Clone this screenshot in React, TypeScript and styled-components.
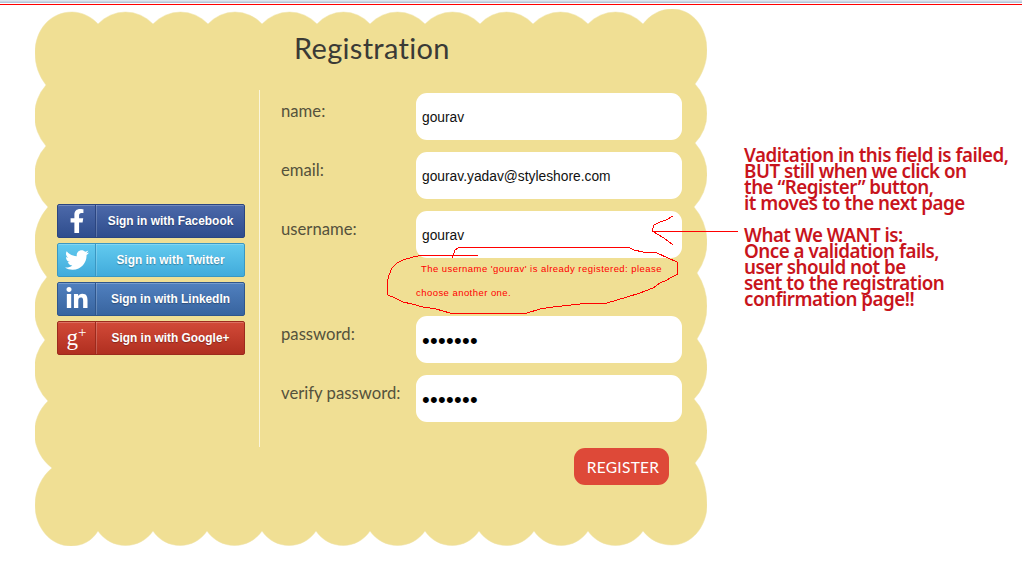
import React from "react";
import styled, { createGlobalStyle } from "styled-components";
import { FaFacebookF, FaTwitter, FaLinkedinIn } from "react-icons/fa";

const Global = createGlobalStyle`
  html, body { margin: 0; padding: 0; background: #fff; }
  body { font-family: "Liberation Sans", Arial, sans-serif; overflow: hidden; }
`;

const Page = styled.div`
  position: relative;
  width: 1022px;
  height: 572px;
  overflow: hidden;
`;

const WindowEdge = styled.div`
  height: 3px;
  background: linear-gradient(#dfe7ef 0, #dfe7ef 1px, #b4c6da 2px);
  border-bottom: 1px solid #fff;
`;
const RedRule = styled.div`
  height: 1px;
  background: #f00;
`;

const Columns = styled.div`
  display: flex;
  align-items: flex-start;
`;

const Card = styled.main`
  position: relative;
  width: 672px;
  height: 537px;
  margin: 4px 0 0 35px;
  flex: none;
`;

const CardShape = styled.svg`
  position: absolute;
  inset: 0;
  z-index: 0;
  display: block;
`;

const CardContent = styled.div`
  position: relative;
  z-index: 1;
`;

const Title = styled.h1`
  margin: 0;
  height: 81px;
  padding: 19px 0 0 259px;
  box-sizing: border-box;
  font: 400 29px/40px "Lato", sans-serif;
  color: #3a3a36;
  letter-spacing: 0.3px;
`;

const Body = styled.div`
  display: flex;
  align-items: flex-start;
`;

const Sidebar = styled.aside`
  width: 224px;
  padding: 114px 0 0 22px;
  box-sizing: border-box;
  display: flex;
  flex-direction: column;
  gap: 5px;
`;

const Divider = styled.div`
  width: 1px;
  height: 357px;
  background: #fbf6dc;
`;

const socialColors = {
  facebook: { top: "#4c69aa", bottom: "#2f4d8d", edge: "#2b4580" },
  twitter: { top: "#62caef", bottom: "#41abdb", edge: "#3a97c2" },
  linkedin: { top: "#5080bf", bottom: "#38649f", edge: "#2f568c" },
  google: { top: "#d24a38", bottom: "#b02f20", edge: "#9c2a1d" },
};

type Network = keyof typeof socialColors;

const SocialButton = styled.a<{ $net: Network }>`
  display: flex;
  width: 188px;
  height: 34px;
  box-sizing: border-box;
  border: 1px solid ${(p) => socialColors[p.$net].edge};
  border-radius: 2px;
  background: linear-gradient(${(p) => socialColors[p.$net].top}, ${(p) => socialColors[p.$net].bottom});
  color: #fff;
  box-shadow: inset 0 1px 0 rgba(255, 255, 255, 0.22);
`;

const SocialIcon = styled.span<{ $net: Network }>`
  flex: none;
  width: 37px;
  display: flex;
  align-items: center;
  justify-content: center;
  border-right: 1px solid ${(p) => socialColors[p.$net].edge};
  font-size: 24px;
`;

const SocialLabel = styled.span`
  flex: 1;
  border-left: 1px solid rgba(255, 255, 255, 0.2);
  text-align: center;
  font: 700 11.9px/33px "Liberation Sans", Arial, sans-serif;
  text-shadow: 0 1px 1px rgba(0, 0, 0, 0.3);
`;

const GoogleGlyph = styled.span`
  font: 400 23px/30px "Liberation Serif", serif;
  sup {
    font-size: 15px;
    line-height: 0;
    vertical-align: 8px;
  }
`;

const Form = styled.form`
  padding: 3px 0 0 21px;
  display: flex;
  flex-direction: column;
  gap: 12px;
`;

const Row = styled.div`
  display: grid;
  grid-template-columns: 135px 266px;
`;

const Label = styled.label`
  padding-top: 7px;
  font: 400 16.7px/22px "Lato", sans-serif;
  color: #55523c;
`;

const Field = styled.input`
  display: block;
  width: 266px;
  height: 47px;
  box-sizing: border-box;
  border: 0;
  outline: 0;
  border-radius: 11px;
  background: #fff;
  padding: 2px 6px 0;
  font: 400 13.8px "Liberation Sans", Arial, sans-serif;
  color: #111;
`;

const SecretField = styled(Field)`
  padding-top: 3px;
  font-size: 22px;
  letter-spacing: 0.3px;
  color: #000;
`;

const ErrorText = styled.p`
  margin: -1px 0 0;
  height: 47px;
  box-sizing: border-box;
  font: 400 9.5px/24px "Liberation Sans", Arial, sans-serif;
  letter-spacing: 0.45px;
  color: #f00;
  text-indent: 5px;
`;

const Actions = styled.div`
  display: flex;
  justify-content: flex-end;
  padding: 14px 13px 0 0;
`;

const RegisterButton = styled.button`
  width: 95px;
  height: 37px;
  border: 0;
  border-radius: 11px;
  background: #de4938;
  color: #fff;
  font: 400 15.5px "Lato", sans-serif;
  letter-spacing: 0.3px;
  padding: 0 0 0 3px;
`;

const Notes = styled.aside`
  margin-left: 37px;
  padding-top: 142px;
  width: 278px;
  flex: none;
  font: 600 18.8px/16px "Noto Sans", sans-serif;
  letter-spacing: -0.5px;
  color: #c8141c;
`;

const NoteBlock = styled.p`
  margin: 0 0 16px;
  white-space: nowrap;
`;

const Scribbles = styled.svg`
  position: absolute;
  inset: 0;
  z-index: 2;
  pointer-events: none;
  fill: none;
  stroke: #f00;
  stroke-width: 1;
`;

const Shape = styled.path`
  fill: #f0df94;
  stroke: #efe3a8;
  stroke-width: 0.5;
`;

/* Outer outline of the scalloped card, traced in page coordinates. */
type Pt = [number, number];
const bulge = (from: Pt, to: Pt, sag: number) => {
  const chord = Math.hypot(to[0] - from[0], to[1] - from[1]);
  const r = (chord * chord) / 4 / (2 * sag) + sag / 2;
  return `A${r.toFixed(1)} ${r.toFixed(1)} 0 0 1 ${to[0]} ${to[1]}`;
};
const chain = (pts: Pt[], sagOf: (a: Pt, b: Pt) => number) =>
  pts
    .slice(1)
    .map((p, i) => bulge(pts[i], p, sagOf(pts[i], p)))
    .join(" ");

const top: Pt[] = [98, 153, 208, 262, 317, 370, 425, 480, 533, 588, 643].map((x) => [x, 24]);
const right: Pt[] = [
  [695, 84],
  [695, 143],
  [694, 207],
  [697, 273],
  [697, 339],
  [694, 399],
  [695, 463],
];
const bottom: Pt[] = [643, 588, 534, 479, 425, 370, 316, 262, 207, 153, 98].map((x) => [x, 531]);
const left: Pt[] = [
  [52, 468],
  [48, 401],
  [45, 340],
  [47, 277],
  [48, 207],
  [46, 146],
  [46, 85],
];
const outline = [
  "M98 24",
  chain(top, () => 12),
  "C650 15 660 9 672 9 C693 9 707 28 707 50 C707 63 702 75 695 84",
  chain(right, (a, b) => 707 - (a[0] + b[0]) / 2),
  "C702 473 707 488 707 505 C707 526 692 545 672 545 C660 545 650 540 643 531",
  chain(bottom, () => 14.5),
  "C92 541 82 546 71 546 C50 546 35 527 35 505 C35 490 42 476 52 468",
  chain(left, (a, b) => (a[0] + b[0]) / 2 - 34.5),
  "C39 76 35 65 35 53 C35 30 50 12 72 12 C82 12 92 17 98 24 Z",
].join(" ");

const loop =
  "M452 258 L455 250 L460 247 L628 247 L634 250 L643 252 L650 252 L657 253 L668 258 L677 262 L678 274 L672 277 L667 280 L660 283 L653 288 L640 293 L627 297 L617 300 L607 303 L580 304 L553 307 L540 309 L527 313 L450 313 L436 309 L423 307 L412 304 L403 302 L395 298 L388 295 L387 283 L389 275 L392 268 L397 263 L403 260 L413 257 L423 255 L478 255";

const socials: { net: Network; label: string; icon: React.ReactNode }[] = [
  { net: "facebook", label: "Sign in with Facebook", icon: <FaFacebookF /> },
  { net: "twitter", label: "Sign in with Twitter", icon: <FaTwitter /> },
  { net: "linkedin", label: "Sign in with LinkedIn", icon: <FaLinkedinIn /> },
  {
    net: "google",
    label: "Sign in with Google+",
    icon: (
      <GoogleGlyph>
        g<sup>+</sup>
      </GoogleGlyph>
    ),
  },
];

export default function App() {
  return (
    <Page>
      <Global />
      <WindowEdge />
      <RedRule />
      <Columns>
        <Card>
          <CardShape width="672" height="537" viewBox="35 9 672 537">
            <Shape d={outline} />
          </CardShape>
          <CardContent>
            <Title>Registration</Title>
            <Body>
              <Sidebar>
                {socials.map((s) => (
                  <SocialButton key={s.net} $net={s.net}>
                    <SocialIcon $net={s.net}>{s.icon}</SocialIcon>
                    <SocialLabel>{s.label}</SocialLabel>
                  </SocialButton>
                ))}
              </Sidebar>
              <Divider />
              <Form onSubmit={(e) => e.preventDefault()}>
                <Row>
                  <Label>name:</Label>
                  <Field defaultValue="gourav" />
                </Row>
                <Row>
                  <Label>email:</Label>
                  <Field defaultValue="gourav.yadav@styleshore.com" />
                </Row>
                <Row>
                  <Label>username:</Label>
                  <div>
                    <Field defaultValue="gourav" />
                    <ErrorText>
                      The username 'gourav' is already registered: please choose another one.
                    </ErrorText>
                  </div>
                </Row>
                <Row>
                  <Label>password:</Label>
                  <SecretField type="password" defaultValue="gourav1" />
                </Row>
                <Row>
                  <Label>verify password:</Label>
                  <SecretField type="password" defaultValue="gourav1" />
                </Row>
                <Actions>
                  <RegisterButton type="button">REGISTER</RegisterButton>
                </Actions>
              </Form>
            </Body>
          </CardContent>
        </Card>
        <Notes>
          <NoteBlock>
            Vaditation in this field is failed,
            <br />
            BUT still when we click on
            <br />
            the “Register” button,
            <br />
            it moves to the next page
          </NoteBlock>
          <NoteBlock>
            What We WANT is:
            <br />
            Once a validation fails,
            <br />
            user should not be
            <br />
            sent to the registration
            <br />
            confirmation page!!
          </NoteBlock>
        </Notes>
      </Columns>
      <Scribbles width="1022" height="572" viewBox="0 0 1022 572" shapeRendering="crispEdges">
        <path d={loop} />
        <path d="M738 232 L652 231" />
        <path d="M652 231 L654 225 L660 222 L666 220 L673 216" />
        <path d="M652 231 L664 238 L672 244 L673 245" />
      </Scribbles>
    </Page>
  );
}
